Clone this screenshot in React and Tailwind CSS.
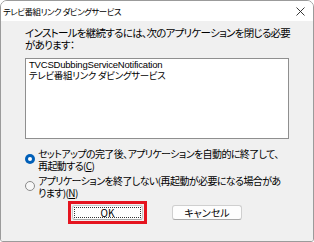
import React from 'react';

const jp = "font-['Noto_Sans_CJK_JP','Noto_Sans',sans-serif] [font-feature-settings:'palt']";

const Radio = ({ checked, lines }) => (
  <div className="flex items-start">
    <div className="w-[13px] shrink-0 pt-[6px]">
      {checked ? (
        <div className="w-[10px] h-[10px] rounded-full bg-[#005fb8] flex items-center justify-center">
          <div className="w-[4px] h-[4px] rounded-full bg-white" />
        </div>
      ) : (
        <div className="w-[10px] h-[10px] rounded-full border border-[#8a8a8a] bg-[#f7f7f7]" />
      )}
    </div>
    <div className="text-[10px] leading-[12px] tracking-[-0.6px] text-black whitespace-nowrap">
      <div>{lines[0]}</div>
      <div>{lines[1]}</div>
    </div>
  </div>
);

export default function App() {
  return (
    <div className={`w-[314px] h-[242px] flex flex-col border border-[#9b9b9b] rounded-t-[7px] rounded-b-[3px] overflow-hidden bg-white ${jp}`}>
      {/* タイトルバー */}
      <div className="h-[20px] flex items-center justify-between pl-[2px] pr-[8px] bg-white">
        <span className="text-[8.5px] tracking-[-0.5px] text-black">テレビ番組リンク ダビングサービス</span>
        <svg width="9" height="9" viewBox="0 0 9 9" className="mt-[1px]">
          <path d="M0.5 0.5 L8.5 8.5 M8.5 0.5 L0.5 8.5" stroke="#222" strokeWidth="0.9" />
        </svg>
      </div>

      <div className="flex-1 bg-[#f0f0f0] pl-[24px] pr-[24px] pt-[6px]">
        <div className="text-[10.5px] leading-[12px] tracking-[-0.72px] text-black whitespace-nowrap">
          <div>インストールを継続するには、次のアプリケーションを閉じる必要</div>
          <div>があります：</div>
        </div>

        <div className="mt-[7px] w-[264px] h-[81px] bg-white border border-[#8f8f8f] pl-[3px] pt-[1px]">
          <div className="font-['Liberation_Sans',sans-serif] text-[9.5px] leading-[10px] tracking-[-0.2px] text-black">
            TVCSDubbingServiceNotification
          </div>
          <div className="text-[9.5px] leading-[10px] tracking-[-0.3px] text-black">
            テレビ番組リンク ダビングサービス
          </div>
        </div>

        <div className="mt-[9px] flex flex-col gap-[3px]">
          <Radio
            checked
            lines={[
              'セットアップの完了後、アプリケーションを自動的に終了して、',
              <span key="c">再起動する(<span className="underline">C</span>)</span>,
            ]}
          />
          <Radio
            lines={[
              'アプリケーションを終了しない(再起動が必要になる場合があ',
              <span key="n">ります)(<span className="underline">N</span>)</span>,
            ]}
          />
        </div>

        <div className="mt-[2px] flex items-center pl-[43px] gap-[25px]">
          <div className="border-[3px] border-[#e5141f] p-[1px]">
            <button className="w-[71px] h-[15px] bg-[#fdfdfd] border border-[#c8c8c8] border-b-[#a8a8a8] rounded-[3px] flex items-center justify-center p-[1px]">
              <span className="w-full h-full border border-dotted border-[#333] flex items-center justify-center text-[10px] leading-none text-black">
                OK
              </span>
            </button>
          </div>
          <button className="w-[70px] h-[15px] bg-[#fdfdfd] border border-[#cfcfcf] border-b-[#a8a8a8] rounded-[3px] flex items-center justify-center text-[10px] leading-none text-black">
            キャンセル
          </button>
        </div>
      </div>
    </div>
  );
}
